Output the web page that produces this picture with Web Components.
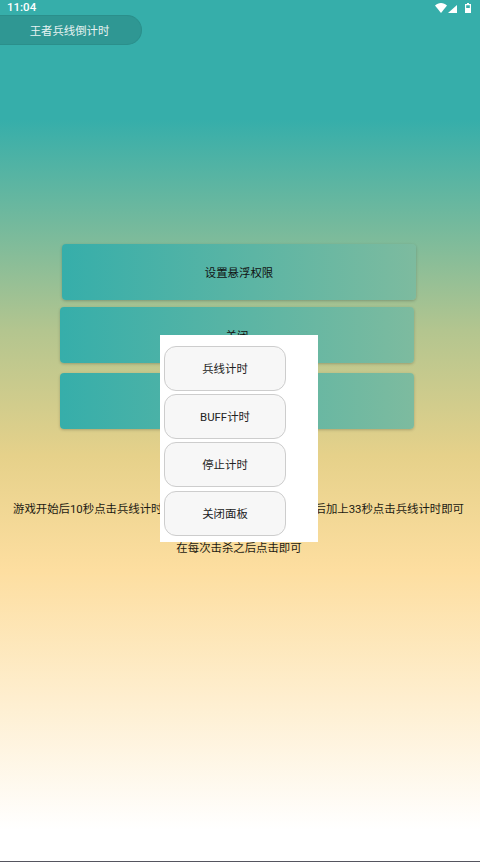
<!DOCTYPE html>
<html lang="zh">
<head>
<meta charset="utf-8">
<title>王者兵线倒计时</title>
<style>
  html, body { margin: 0; height: 100%; }
  body {
    font-family: Roboto, "Noto Sans CJK SC", sans-serif;
    background: linear-gradient(180deg, #36aeaa 0px, #36aeaa 120px, #b3c58f 330px, #e6d18a 456px, #fddea0 570px, #ffffff 830px);
    overflow: hidden;
  }
</style>
</head>
<body>
<app-screen>
  <status-bar slot="status"></status-bar>
  <title-pill slot="title">王者兵线倒计时</title-pill>
  <grad-button slot="actions" style="margin-left:62px">设置悬浮权限</grad-button>
  <grad-button slot="actions" style="margin-left:60px;margin-top:7px">关闭</grad-button>
  <grad-button slot="actions" style="margin-left:60px;margin-top:10px"></grad-button>
  <hint-text slot="hints"></hint-text>
  <float-panel slot="overlay">
    <panel-button>兵线计时</panel-button>
    <panel-button>BUFF计时</panel-button>
    <panel-button>停止计时</panel-button>
    <panel-button style="margin-top:1px">关闭面板</panel-button>
  </float-panel>
</app-screen>

<script>
class AppScreen extends HTMLElement {
  constructor() {
    super();
    this.attachShadow({ mode: "open" });
    this.shadowRoot.innerHTML = `
      <style>
        :host { display: flex; flex-direction: column; position: relative; width: 480px; height: 862px; overflow: hidden; border-bottom: 1px solid #55555f; box-sizing: border-box; }
        .title { margin-top: 1px; }
        .actions { display: flex; flex-direction: column; margin-top: 199px; }
        .hints { margin-top: 72px; }
      </style>
      <slot name="status"></slot>
      <div class="title"><slot name="title"></slot></div>
      <div class="actions"><slot name="actions"></slot></div>
      <div class="hints"><slot name="hints"></slot></div>
      <slot name="overlay"></slot>
    `;
  }
}

class StatusBar extends HTMLElement {
  constructor() {
    super();
    this.attachShadow({ mode: "open" });
    this.shadowRoot.innerHTML = `
      <style>
        :host { display: flex; align-items: center; justify-content: space-between; height: 14px; padding: 0 9px 0 7px; color: #fff; font: 500 11.5px Roboto, sans-serif; }
        .icons { display: flex; align-items: flex-end; height: 10px; margin-top: 1px; }
        .cell { margin: 0 8px 0 1px; }
        svg { display: block; fill: #fff; }
      </style>
      <span>11:04</span>
      <div class="icons">
        <svg width="12" height="10" viewBox="0 0 12 10"><path d="M0 2.500C1.700 1 3.700 0 6 0S10.300 1 12 2.500L6 10z"/></svg>
        <svg class="cell" width="9" height="8" viewBox="0 0 9 8"><path d="M9 0V8H0z"/></svg>
        <svg width="6" height="10" viewBox="0 0 6 10"><path fill-rule="evenodd" d="M2 0H4V1H6V10H0V1H2zM1.200 2.200V5H4.800V2.200z"/></svg>
      </div>
    `;
  }
}

class TitlePill extends HTMLElement {
  constructor() {
    super();
    this.attachShadow({ mode: "open" });
    this.shadowRoot.innerHTML = `
      <style>
        :host { display: block; box-sizing: border-box; width: 142px; height: 30px; line-height: 30px; padding-right: 2px; text-align: center;
          background: #2f9793; border: 1px solid #2b8f8b; border-left: 0; border-radius: 0 15px 15px 0;
          color: #e6f3f2; font-size: 11.4px; font-family: Roboto, "Noto Sans CJK SC", sans-serif; }
      </style>
      <slot></slot>
    `;
  }
}

class GradButton extends HTMLElement {
  constructor() {
    super();
    this.attachShadow({ mode: "open" });
    this.shadowRoot.innerHTML = `
      <style>
        :host { display: flex; align-items: center; justify-content: center; width: 354px; height: 56px; border-radius: 4px;
          background: linear-gradient(90deg, #36aeaa, #7dbb9f);
          box-shadow: 0 1px 3px rgba(0,0,0,.22);
          color: #111; font-size: 11.4px; font-family: Roboto, "Noto Sans CJK SC", sans-serif; }
      </style>
      <slot></slot>
    `;
  }
}

class HintText extends HTMLElement {
  constructor() {
    super();
    this.attachShadow({ mode: "open" });
    this.shadowRoot.innerHTML = `
      <style>
        :host { display: flex; flex-direction: column; align-items: center; gap: 23px; color: #1c1a12; font-size: 11.4px; line-height: 16px; font-family: Roboto, "Noto Sans CJK SC", sans-serif; }
        .row { display: flex; justify-content: space-between; box-sizing: border-box; width: 100%; padding: 0 16px 0 13px; }
        .second { margin-right: 2px; }
      </style>
      <div class="row"><span>游戏开始后10秒点击兵线计时</span><span>后加上33秒点击兵线计时即可</span></div>
      <div class="second">在每次击杀之后点击即可</div>
    `;
  }
}

class FloatPanel extends HTMLElement {
  constructor() {
    super();
    this.attachShadow({ mode: "open" });
    this.shadowRoot.innerHTML = `
      <style>
        :host { position: absolute; left: 160px; top: 335px; width: 158px; height: 207px; box-sizing: border-box; background: #fff;
          padding: 11px 0 0 4px; display: flex; flex-direction: column; gap: 3px; }
      </style>
      <slot></slot>
    `;
  }
}

class PanelButton extends HTMLElement {
  constructor() {
    super();
    this.attachShadow({ mode: "open" });
    this.shadowRoot.innerHTML = `
      <style>
        :host { display: flex; flex: none; align-items: center; justify-content: center; box-sizing: border-box; width: 122px; height: 45px; padding-bottom: 2px;
          background: #f7f7f7; border: 1.500px solid #cdcdcd; border-radius: 12px; color: #222; font-size: 11.4px;
          font-family: Roboto, "Noto Sans CJK SC", sans-serif; }
      </style>
      <slot></slot>
    `;
  }
}

customElements.define("app-screen", AppScreen);
customElements.define("status-bar", StatusBar);
customElements.define("title-pill", TitlePill);
customElements.define("grad-button", GradButton);
customElements.define("hint-text", HintText);
customElements.define("float-panel", FloatPanel);
customElements.define("panel-button", PanelButton);
</script>
</body>
</html>
